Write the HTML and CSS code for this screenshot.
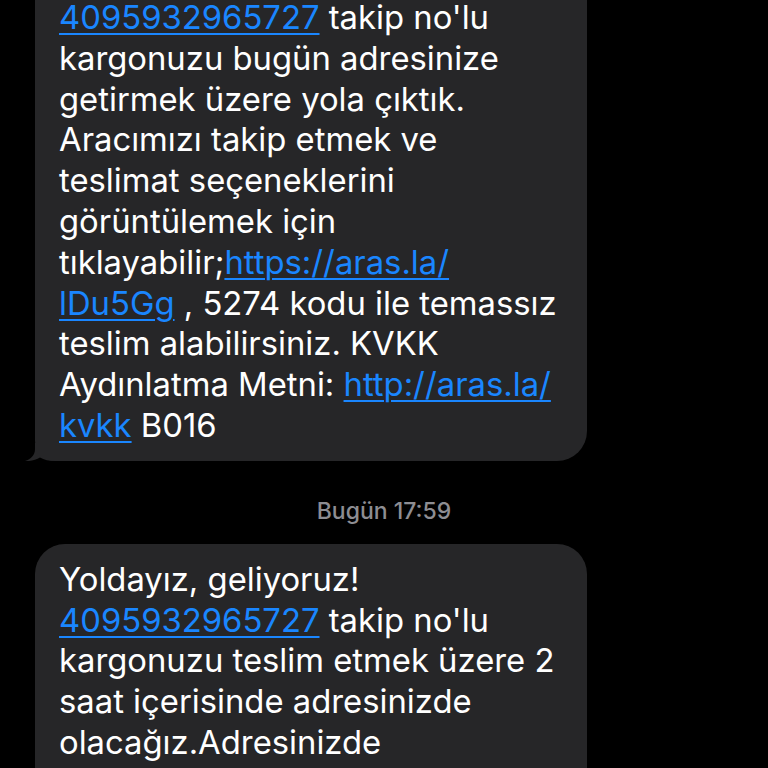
FILE: index.html
```html
<!DOCTYPE html>
<html lang="tr">
<head>
<meta charset="utf-8">
<link rel="stylesheet" href="styles.css">
</head>
<body>
<div class="thread">
  <div class="bubble first">
    <div class="text">
      <span class="line"><a class="link">4095932965727</a> takip no'lu</span>
      <span class="line">kargonuzu bugün adresinize</span>
      <span class="line">getirmek üzere yola çıktık.</span>
      <span class="line">Aracımızı takip etmek ve</span>
      <span class="line">teslimat seçeneklerini</span>
      <span class="line">görüntülemek için</span>
      <span class="line">tıklayabilir;<a class="link">https://aras.la/</a></span>
      <span class="line"><a class="link">lDu5Gg</a> , 5274 kodu ile temassız</span>
      <span class="line">teslim alabilirsiniz. KVKK</span>
      <span class="line">Aydınlatma Metni: <a class="link">http://aras.la/</a></span>
      <span class="line"><a class="link">kvkk</a> B016</span>
    </div>
    <svg class="tail" width="30" height="18" viewBox="0 0 30 18"><path d="M10 0 L10 6 C10 12 6 16 0 18 C5 18.5 11 17 15 14.5 C19 17 24 18 30 18 L30 0 Z" fill="#262628"/></svg>
  </div>
  <div class="stamp">Bugün 17:59</div>
  <div class="bubble last">
    <div class="text">
      <span class="line">Yoldayız, geliyoruz!</span>
      <span class="line"><a class="link">4095932965727</a> takip no'lu</span>
      <span class="line">kargonuzu teslim etmek üzere 2</span>
      <span class="line">saat içerisinde adresinizde</span>
      <span class="line">olacağız.Adresinizde</span>
    </div>
  </div>
</div>
</body>
</html>
```
FILE: styles.css
```css
html, body {
  margin: 0;
  padding: 0;
  background: #000;
  width: 768px;
  height: 768px;
  overflow: hidden;
}
.thread {
  display: flex;
  flex-direction: column;
  align-items: flex-start;
  padding-left: 35px;
  margin-top: -18px;
  font-family: Inter, "Noto Sans", sans-serif;
}
.bubble {
  position: relative;
  width: 552px;
  box-sizing: border-box;
  background: #262628;
  border-radius: 30px;
  padding: 15px 24px 15px 24px;
  color: #fff;
}
.bubble.first {
  border-radius: 0 0 30px 20px;
}
.bubble.last {
  padding-bottom: 40px;
}
.text {
  font-size: 32.8px;
  line-height: 40.8px;
  letter-spacing: 0;
}
.line {
  display: block;
  white-space: nowrap;
}
.link {
  color: #1a86ff;
  text-decoration: underline;
  text-decoration-thickness: 2px;
  text-underline-offset: 4px;
}
.tail {
  position: absolute;
  left: -10px;
  bottom: 0;
}
.stamp {
  align-self: center;
  margin-left: -35px;
  margin-top: 37px;
  margin-bottom: 20px;
  height: 26px;
  line-height: 26px;
  font-size: 23px;
  font-weight: 500;
  color: #8d8d92;
}
```
